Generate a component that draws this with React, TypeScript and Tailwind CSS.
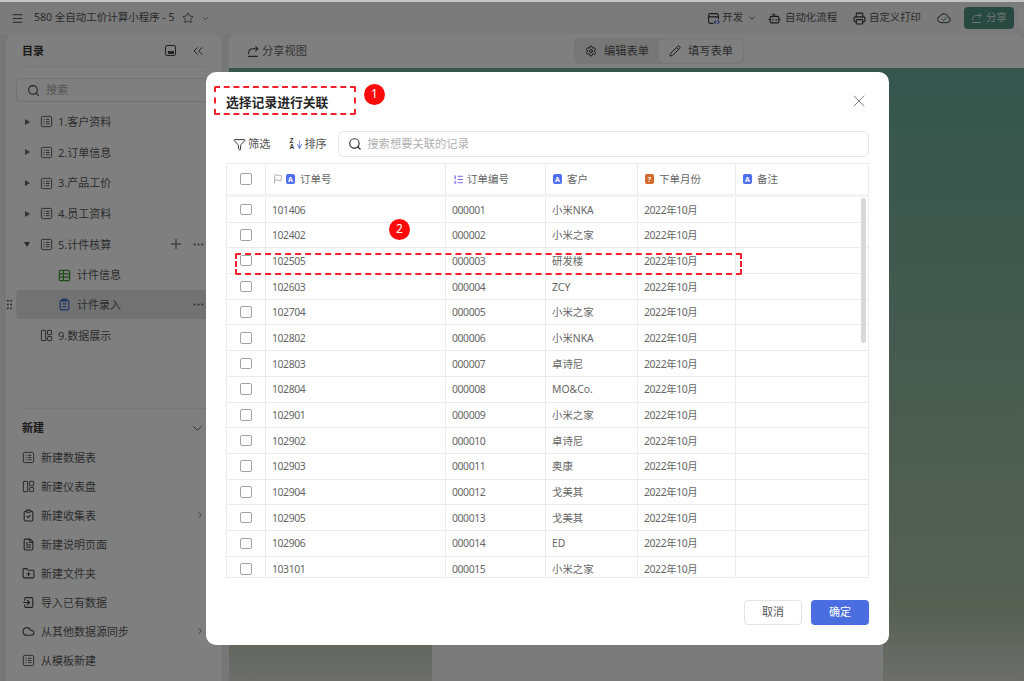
import React from 'react';
import {
  Bot,
  ChevronDown,
  ChevronRight,
  ChevronsLeft,
  ClipboardCheck,
  Cloud,
  Ellipsis,
  FileText,
  Flag,
  FolderPlus,
  Funnel,
  GripVertical,
  ListOrdered,
  Menu,
  Pencil,
  Plus,
  Printer,
  Search,
  Settings,
  Star,
  X,
  ArrowDown,
} from 'lucide-react';

const FONT = "font-['Noto_Sans','Noto_Sans_CJK_SC',sans-serif]";

const rows = [
  ['101406', '000001', '小米NKA'],
  ['102402', '000002', '小米之家'],
  ['102505', '000003', '研发楼'],
  ['102603', '000004', 'ZCY'],
  ['102704', '000005', '小米之家'],
  ['102802', '000006', '小米NKA'],
  ['102803', '000007', '卓诗尼'],
  ['102804', '000008', 'MO&Co.'],
  ['102901', '000009', '小米之家'],
  ['102902', '000010', '卓诗尼'],
  ['102903', '000011', '奥康'],
  ['102904', '000012', '戈美其'],
  ['102905', '000013', '戈美其'],
  ['102906', '000014', 'ED'],
  ['103101', '000015', '小米之家'],
];

function ShareIcon({ className }: { className?: string }) {
  return (
    <svg viewBox="0 0 24 24" fill="none" stroke="currentColor" strokeWidth="2" strokeLinecap="round" strokeLinejoin="round" className={className}>
      <path d="M3 21h16" />
      <path d="M3 16c0-5 3-9 8-9h9" />
      <path d="M16 3l4 4-4 4" />
    </svg>
  );
}

function SheetIcon({ className }: { className?: string }) {
  return (
    <svg viewBox="0 0 24 24" fill="none" stroke="currentColor" strokeWidth="1.6" strokeLinejoin="round" className={className}>
      <rect x="2.5" y="2.5" width="19" height="19" rx="2.5" />
      <path d="M6.5 8h2M6.5 12h2M6.5 16h2M11 8h6.5M11 12h6.5M11 16h6.5" />
    </svg>
  );
}

function DashIcon({ className }: { className?: string }) {
  return (
    <svg viewBox="0 0 24 24" fill="none" stroke="currentColor" strokeWidth="1.7" strokeLinejoin="round" className={className}>
      <rect x="2.5" y="2.5" width="8" height="19" rx="1" />
      <rect x="14" y="2.5" width="7.5" height="8" rx="1" />
      <rect x="14" y="14" width="7.5" height="7.5" rx="1" />
    </svg>
  );
}

function GridIcon({ className }: { className?: string }) {
  return (
    <svg viewBox="0 0 24 24" fill="none" stroke="currentColor" strokeWidth="2.2" className={className}>
      <rect x="2.5" y="2.5" width="19" height="19" rx="2" />
      <path d="M2.5 9h19M2.5 15h19M10 2.5v19" />
    </svg>
  );
}

function FormIcon({ className }: { className?: string }) {
  return (
    <svg viewBox="0 0 24 24" fill="none" stroke="currentColor" strokeWidth="2.2" strokeLinejoin="round" className={className}>
      <rect x="4" y="4" width="16" height="18" rx="3" />
      <rect x="8" y="2" width="8" height="4" rx="1" />
      <path d="M8.5 11h7M8.5 16h7" />
    </svg>
  );
}

function ImportIcon({ className }: { className?: string }) {
  return (
    <svg viewBox="0 0 24 24" fill="none" stroke="currentColor" strokeWidth="2" strokeLinecap="round" strokeLinejoin="round" className={className}>
      <path d="M5 8V5a2 2 0 0 1 2-2h11a2 2 0 0 1 2 2v14a2 2 0 0 1-2 2H7a2 2 0 0 1-2-2v-3" />
      <path d="M3 12h10M10 8l4 4-4 4" />
    </svg>
  );
}

function DevIcon({ className }: { className?: string }) {
  return (
    <svg viewBox="0 0 24 24" fill="none" strokeWidth="2" strokeLinecap="round" strokeLinejoin="round" className={className}>
      <path d="M11 21H6a3 3 0 0 1-3-3V6a3 3 0 0 1 3-3h12a3 3 0 0 1 3 3v7" stroke="#333" />
      <path d="M3 9h18" stroke="#333" />
      <path d="M16 16l-2.5 2.5L16 21M20 16l2.5 2.5L20 21" stroke="#2f54d0" />
    </svg>
  );
}

function CloudOk({ className }: { className?: string }) {
  return (
    <svg viewBox="0 0 24 24" fill="none" strokeWidth="1.5" strokeLinecap="round" strokeLinejoin="round" className={className}>
      <path d="M7 19a5 5 0 0 1-.6-9.9 6 6 0 0 1 11.4 1.2A4.4 4.4 0 0 1 17 19z" stroke="#444" />
      <path d="M9 13.5l2.2 2.2 4-4" stroke="#2e9e5b" />
    </svg>
  );
}

function TextTag({ orange }: { orange?: boolean }) {
  return (
    <span className={`flex h-[10px] w-[9px] shrink-0 items-center justify-center rounded-[2px] text-[7px] leading-none font-bold text-white ${orange ? 'bg-[#d2692a]' : 'bg-[#4f6ef0]'}`}>
      {orange ? '?' : 'A'}
    </span>
  );
}

function Checkbox() {
  return <span className="block h-[11.5px] w-[11.5px] rounded-[2px] border border-[#a3a3a3] bg-white" />;
}

function TreeRow({ label, icon, open, closed }: { label: string; icon: React.ReactNode; open?: boolean; closed?: boolean }) {
  return (
    <div className="flex h-[30.65px] items-center pl-[18px] text-[#5a5a5a]">
      <span className="flex w-[16px] justify-start">
        {closed && <span className="ml-[1px] h-0 w-0 border-y-[3.5px] border-l-[5px] border-y-transparent border-l-[#666]" />}
        {open && <span className="h-0 w-0 border-x-[3.5px] border-t-[5px] border-x-transparent border-t-[#555]" />}
      </span>
      {icon}
      <span className="ml-[5px] pt-[1px] text-[11px]">{label}</span>
    </div>
  );
}

function NewRow({ label, icon, more }: { label: string; icon: React.ReactNode; more?: boolean }) {
  return (
    <div className="flex h-[29px] items-center pl-[16px] pr-[17px] text-[#5a5a5a]">
      {icon}
      <span className="ml-[6px] pt-[2px] text-[11px]">{label}</span>
      {more && <ChevronRight className="ml-auto h-[10px] w-[10px] text-[#666]" />}
    </div>
  );
}

function Sidebar() {
  const ic = 'h-[13px] w-[13px] shrink-0 text-[#444]';
  return (
    <aside className="ml-[6px] flex w-[216px] shrink-0 flex-col rounded-t-[8px] bg-white">
      <div className="mx-[16px] flex h-[33px] items-center border-b border-[#efefef] pt-[1px]">
        <span className="pt-[1px] text-[11px] font-bold text-[#333]">目录</span>
        <span className="ml-auto flex h-[11px] w-[11px] items-end justify-center rounded-[2px] border border-[#444] pb-[1px]">
          <span className="h-[3px] w-[6px] bg-[#444]" />
        </span>
        <ChevronsLeft className="ml-[14px] h-[16px] w-[16px] text-[#333]" strokeWidth={1.4} />
      </div>
      <div className="mx-[10px] mt-[11px] flex h-[24px] items-center rounded-[4px] border border-[#e4e4e4] bg-white pl-[10px]">
        <Search className="h-[13px] w-[13px] text-[#444]" />
        <span className="ml-[6px] text-[11px] text-[#aaa]">搜索</span>
      </div>
      <div className="mt-[4.5px]">
        <TreeRow closed label="1.客户资料" icon={<SheetIcon className={ic} />} />
        <TreeRow closed label="2.订单信息" icon={<SheetIcon className={ic} />} />
        <TreeRow closed label="3.产品工价" icon={<SheetIcon className={ic} />} />
        <TreeRow closed label="4.员工资料" icon={<SheetIcon className={ic} />} />
        <div className="relative">
          <TreeRow open label="5.计件核算" icon={<SheetIcon className={ic} />} />
          <Plus className="absolute top-[7px] left-[162px] h-[16px] w-[16px] text-[#444]" strokeWidth={1.3} />
          <Ellipsis className="absolute top-[9px] left-[186px] h-[13px] w-[13px] text-[#666]" />
        </div>
        <div className="flex h-[30.65px] items-center pl-[52px] text-[#5a5a5a]">
          <GridIcon className="h-[13px] w-[13px] text-[#3f9a2f]" />
          <span className="ml-[6px] pt-[1px] text-[11px]">计件信息</span>
        </div>
        <div className="relative mb-[1px] ml-[10px] flex h-[29px] items-center rounded-[4px] bg-[#e4e4e4] pl-[42px] text-[#5a5a5a]">
          <GripVertical className="absolute top-[8px] left-[-13px] h-[13px] w-[13px] text-[#666]" />
          <FormIcon className="h-[13px] w-[13px] text-[#3f63d8]" />
          <span className="ml-[6px] pt-[1px] text-[11px]">计件录入</span>
          <Ellipsis className="absolute top-[8px] left-[176px] h-[13px] w-[13px] text-[#666]" />
        </div>
        <TreeRow label="9.数据展示" icon={<DashIcon className={ic} />} />
      </div>
      <div className="mt-auto pb-[6.5px]">
        <div className="mx-[16px] flex h-[34.5px] items-center border-t border-[#efefef] pt-[5px] pr-[1px]">
          <span className="text-[11px] font-bold text-[#333]">新建</span>
          <ChevronDown className="ml-auto h-[15px] w-[15px] text-[#444]" strokeWidth={1.3} />
        </div>
        <NewRow label="新建数据表" icon={<SheetIcon className={ic} />} />
        <NewRow label="新建仪表盘" icon={<DashIcon className={ic} />} />
        <NewRow more label="新建收集表" icon={<ClipboardCheck className={ic} />} />
        <NewRow label="新建说明页面" icon={<FileText className={ic} />} />
        <NewRow label="新建文件夹" icon={<FolderPlus className={ic} />} />
        <NewRow label="导入已有数据" icon={<ImportIcon className={ic} />} />
        <NewRow more label="从其他数据源同步" icon={<Cloud className={ic} />} />
        <NewRow label="从模板新建" icon={<SheetIcon className={ic} />} />
      </div>
    </aside>
  );
}

function Main() {
  return (
    <main className="relative ml-[7px] flex min-w-0 flex-1 flex-col overflow-hidden rounded-t-[8px] bg-white">
      <div className="flex h-[34px] shrink-0 items-center pl-[18px] text-[#666]">
        <ShareIcon className="h-[13px] w-[13px] text-[#444]" />
        <span className="ml-[2px] pt-[1px] text-[11.25px]">分享视图</span>
        <div className="ml-[267px] flex h-[26px] w-[170px] items-center rounded-[5px] bg-[#eeeeee] pl-[11px] pr-[1px]">
          <Settings className="h-[12px] w-[12px] text-[#333]" />
          <span className="ml-[7px] pt-[1px] text-[11.25px] text-[#555]">编辑表单</span>
          <div className="ml-[10px] flex h-[24px] flex-1 items-center rounded-[5px] bg-white pl-[10px]">
            <Pencil className="h-[12px] w-[12px] text-[#333]" />
            <span className="ml-[7px] pt-[1px] text-[11.25px] text-[#555]">填写表单</span>
          </div>
        </div>
      </div>
      <div className="flex-1 bg-[linear-gradient(180deg,#68ac98_0%,#88b4a0_40%,#9cbca2_65%,#acc2a8_88%,#dcdcd6_100%)]" />
      <div className="absolute bottom-0 left-[203px] h-[60px] w-[451px] bg-[#f6f6f6]" />
    </main>
  );
}

function Dialog() {
  return (
    <div className="absolute top-[70px] left-[206px] flex h-[573px] w-[683px] flex-col rounded-[10px] bg-white px-[20px]">
      <div className="flex h-[59px] shrink-0 items-center justify-between pt-[3px]">
        <span className="text-[12.8px] font-bold text-[#262626]">选择记录进行关联</span>
        <X className="mr-0 mb-[4px] h-[20px] w-[20px] text-[#777]" strokeWidth={1.1} />
      </div>
      <div className="flex h-[26px] shrink-0 items-center text-[11.2px] text-[#555]">
        <Funnel className="ml-[7px] h-[13px] w-[13px] text-[#333]" strokeWidth={1.8} />
        <span className="ml-[2px] pt-[1px]">筛选</span>
        <span className="ml-[19px] flex w-[7px] flex-col font-['Liberation_Sans',sans-serif] text-[6.5px] leading-[6.5px] font-bold text-[#333]">
          <span>Z</span>
          <span>A</span>
        </span>
        <ArrowDown className="h-[13px] w-[7px] text-[#3f63d8]" strokeWidth={2} preserveAspectRatio="none" />
        <span className="ml-[1px] pt-[1px]">排序</span>
        <div className="ml-[11.5px] flex h-[26px] flex-1 items-center rounded-[5px] border border-[#e6e6e6] pl-[9px]">
          <Search className="h-[14px] w-[14px] text-[#333]" />
          <span className="ml-[5px] pt-[1px] text-[11.3px] text-[#b0b0b0]">搜索想要关联的记录</span>
        </div>
      </div>
      <div className="relative mt-[6px] h-[415px] overflow-hidden border border-[#ececec] text-[#666]">
        <div className="grid h-[33px] grid-cols-[39px_180px_100px_92px_98px_1fr] border-b-[3px] border-[#f4f4f4] text-[10.5px]">
          <div className="flex items-center justify-center border-r border-[#ebebeb]">
            <Checkbox />
          </div>
          <div className="flex items-center border-r border-[#ebebeb] pl-[7px]">
            <Flag className="h-[10px] w-[10px] text-[#777]" strokeWidth={1.4} />
            <span className="ml-[3px]">
              <TextTag />
            </span>
            <span className="ml-[5px] pt-[2px]">订单号</span>
          </div>
          <div className="flex items-center border-r border-[#ebebeb] pl-[7px]">
            <ListOrdered className="h-[11px] w-[11px] text-[#6d5be8]" />
            <span className="ml-[3px] pt-[2px]">订单编号</span>
          </div>
          <div className="flex items-center border-r border-[#ebebeb] pl-[7px]">
            <TextTag />
            <span className="ml-[5px] pt-[2px]">客户</span>
          </div>
          <div className="flex items-center border-r border-[#ebebeb] pl-[7px]">
            <TextTag orange />
            <span className="ml-[5px] pt-[2px]">下单月份</span>
          </div>
          <div className="flex items-center pl-[7px]">
            <TextTag />
            <span className="ml-[5px] pt-[2px]">备注</span>
          </div>
        </div>
        {rows.map((r) => (
          <div key={r[0]} className="grid h-[25.7px] grid-cols-[39px_180px_100px_92px_98px_1fr] border-b border-[#ebebeb] text-[10.4px]">
            <div className="flex items-center justify-center border-r border-[#ebebeb]">
              <Checkbox />
            </div>
            <div className="flex items-center border-r border-[#ebebeb] pt-[2px] pl-[6px] tracking-[-0.4px]">{r[0]}</div>
            <div className="flex items-center border-r border-[#ebebeb] pt-[2px] pl-[6px] tracking-[-0.4px]">{r[1]}</div>
            <div className="flex items-center border-r border-[#ebebeb] pt-[2px] pl-[6px]">{r[2]}</div>
            <div className="flex items-center border-r border-[#ebebeb] pt-[2px] pl-[6px] tracking-[-0.4px]">2022年10月</div>
            <div />
          </div>
        ))}
        <div className="absolute top-[34px] right-[2px] h-[145px] w-[5px] rounded-full bg-[#d9d9d9]" />
      </div>
      <div className="flex flex-1 items-start justify-end gap-[9px] pt-[22px] text-[11px]">
        <button className="flex h-[25px] w-[58px] items-center justify-center rounded-[4px] border border-[#e4e4e4] text-[#555]">取消</button>
        <button className="flex h-[25px] w-[58px] items-center justify-center rounded-[4px] bg-[#4a6ee0] text-white">确定</button>
      </div>
      <div className="absolute top-[14px] left-[8px] h-[29px] w-[142px] rounded-[2px] border-2 border-dashed border-[#f5222d]" />
      <div className="absolute top-[11.5px] left-[158px] flex h-[21px] w-[21px] items-center justify-center rounded-full bg-[#ff0a0a] text-[12px] text-white">1</div>
      <div className="absolute top-[146.5px] left-[183px] flex h-[21px] w-[21px] items-center justify-center rounded-full bg-[#ff0a0a] text-[12px] text-white">2</div>
      <div className="absolute top-[181px] left-[29px] h-[22px] w-[507px] rounded-[2px] border-2 border-dashed border-[#f5222d]" />
    </div>
  );
}

export default function App() {
  return (
    <div className={`h-[681px] w-[1024px] overflow-hidden bg-[#c4c4c4] ${FONT}`}>
      <div className="relative mt-[2px] flex h-[679px] flex-col bg-[#efefef] pt-0">
        <header className="flex h-[32px] shrink-0 items-center bg-[#f6f6f6] pl-[11px] text-[#555]">
          <Menu className="h-[13px] w-[13px] text-[#333]" strokeWidth={1.6} />
          <span className="ml-[10px] text-[10.5px]">580 全自动工价计算小程序 - 5</span>
          <Star className="ml-[7px] h-[12px] w-[12px] text-[#444]" strokeWidth={1.6} />
          <ChevronDown className="ml-[7px] h-[9px] w-[9px] text-[#555]" />
          <div className="ml-auto flex items-center">
            <DevIcon className="h-[13px] w-[13px]" />
            <span className="ml-[2px] text-[10.4px]">开发</span>
            <ChevronDown className="ml-[4px] h-[10px] w-[10px]" />
            <Bot className="ml-[11px] h-[13px] w-[13px] text-[#333]" />
            <span className="ml-[4px] text-[10.4px]">自动化流程</span>
            <Printer className="ml-[16px] h-[13px] w-[13px] text-[#333]" />
            <span className="ml-[3px] text-[10.4px]">自定义打印</span>
            <CloudOk className="ml-[15px] h-[16px] w-[16px]" />
            <div className="ml-[12px] flex h-[22px] w-[50px] items-center justify-center rounded-[4px] bg-[#4c9480] text-[#e8e8e8]">
              <ShareIcon className="h-[12px] w-[12px]" />
              <span className="ml-[3px] text-[10.4px]">分享</span>
            </div>
            <div className="ml-[5px] h-[22px] w-[5px] rounded-l-[4px] bg-white" />
          </div>
        </header>
        <div className="flex min-h-0 flex-1">
          <Sidebar />
          <Main />
        </div>
        <div className="absolute inset-0 bg-black/50" />
        <Dialog />
      </div>
    </div>
  );
}
